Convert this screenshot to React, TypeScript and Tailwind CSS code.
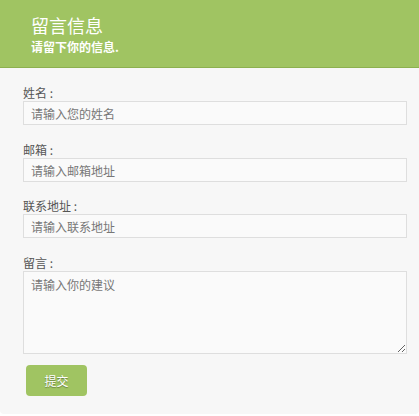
const fields = [
  { label: "姓名 :", placeholder: "请输入您的姓名", gap: "mb-[17px]" },
  { label: "邮箱 :", placeholder: "请输入邮箱地址", gap: "mb-4" },
  { label: "联系地址 :", placeholder: "请输入联系地址", gap: "mb-[17px]" },
];

export default function App() {
  return (
    <div className="w-[419px] bg-white font-['Noto_Sans_CJK_SC','Noto_Sans',sans-serif]">
      <div className="rounded-b-[4px] bg-[#f7f7f7] overflow-hidden">
        {/* header */}
        <div className="h-[68px] bg-[#a0c462] border-b border-[#8cb04f] pl-[31px] pt-[12px] text-white">
          <h1 className="text-[18px] leading-[26px] font-normal">留言信息</h1>
          <p className="text-[12px] leading-[16px] font-bold mt-[1px]">请留下你的信息.</p>
        </div>

        {/* form */}
        <form className="px-[23px] pt-[17px] pb-[18px]" onSubmit={(e) => e.preventDefault()}>
          {fields.map((f) => (
            <div key={f.label} className={f.gap}>
              <label className="block text-[12px] leading-4 text-[#555]">{f.label}</label>
              <input
                type="text"
                placeholder={f.placeholder}
                className="block w-[384px] h-6 px-[7px] border border-[#dedede] bg-[#fafafa] text-[12px] text-[#555] placeholder:text-[#777] outline-none"
              />
            </div>
          ))}
          <div>
            <label className="block text-[12px] leading-4 text-[#555]">留言 :</label>
            <textarea
              placeholder="请输入你的建议"
              className="block w-[384px] h-[83px] px-[7px] pt-[3px] border border-[#dedede] bg-[#fafafa] text-[12px] leading-5 text-[#555] placeholder:text-[#777] outline-none"
            />
          </div>
          <button
            type="submit"
            className="mt-[11px] ml-[3px] w-[61px] h-[31px] rounded-[4px] bg-[#a0c462] text-white text-[12px] [text-shadow:0_1px_1px_rgba(0,0,0,0.35)]"
          >
            提交
          </button>
        </form>
      </div>
    </div>
  );
}
